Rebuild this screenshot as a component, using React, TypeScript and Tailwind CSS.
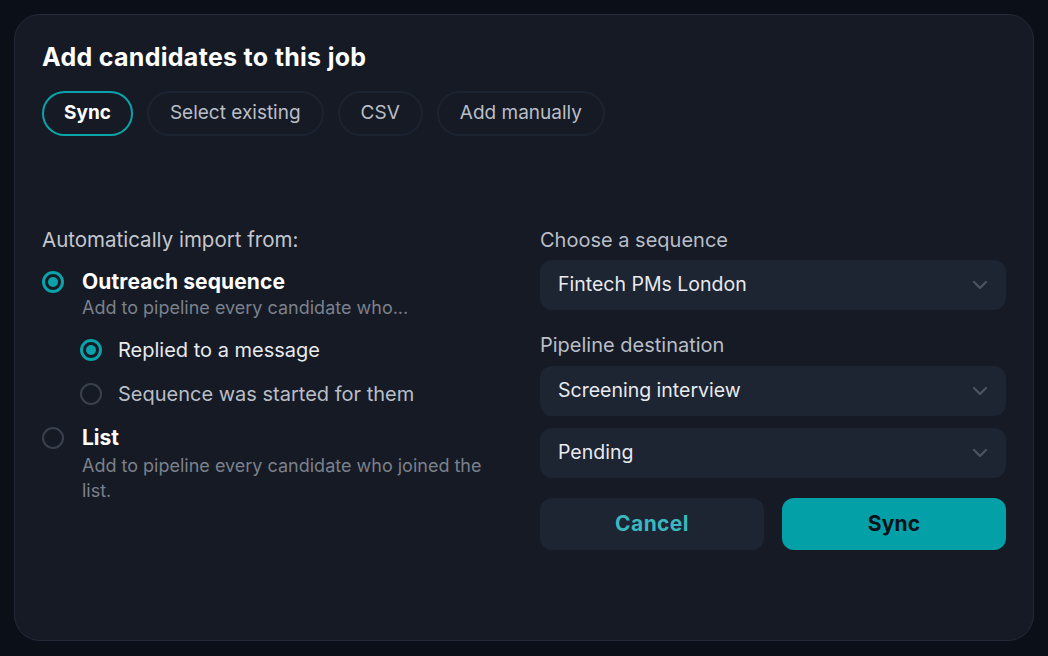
import React from "react";

function Radio({ checked }: { checked: boolean }) {
  return checked ? (
    <span className="flex h-[22px] w-[22px] shrink-0 items-center justify-center rounded-full border-[3px] border-[#0aa3a9]">
      <span className="h-[10px] w-[10px] rounded-full bg-[#0aa3a9]" />
    </span>
  ) : (
    <span className="h-[22px] w-[22px] shrink-0 rounded-full border-[2.5px] border-[#3a414e]" />
  );
}

function Chevron() {
  return (
    <svg width="24" height="24" viewBox="0 0 24 24" fill="none" stroke="#4a5262" strokeWidth="2.4" strokeLinecap="round" strokeLinejoin="round">
      <path d="M6 9l6 6 6-6" />
    </svg>
  );
}

function Select({ value }: { value: string }) {
  return (
    <div className="flex h-[50px] items-center justify-between rounded-[12px] bg-[#1d2432] pl-[18px] pr-[14px]">
      <span className="text-[19.5px] text-[#e8eaee]">{value}</span>
      <Chevron />
    </div>
  );
}

export default function App() {
  const tabs = ["Sync", "Select existing", "CSV", "Add manually"];
  return (
    <div
      className="flex h-[656px] w-[1048px] bg-[#0b0f17] p-[14px] pb-[15px]"
      style={{ fontFamily: "Inter, 'Noto Sans', sans-serif" }}
    >
      <div className="flex flex-1 flex-col rounded-[26px] border border-[#232b38] bg-[#151a25] px-[27px] pt-[27px]">
        <h1 className="text-[25px] font-bold leading-[30px] tracking-[0.3px] text-white">Add candidates to this job</h1>
        <div className="mt-[19px] flex gap-[14px]">
          {tabs.map((t, i) => (
            <div
              key={t}
              className={
                i === 0
                  ? "flex h-[45px] items-center rounded-full border-2 border-[#0aa3a9] px-[20px] text-[19px] font-bold text-white"
                  : "flex h-[45px] items-center rounded-full border-2 border-[#1c2330] px-[21px] text-[19px] text-[#b9bec7]"
              }
            >
              {t}
            </div>
          ))}
        </div>

        <div className="mt-[92px] flex gap-[50px]">
          <div className="w-[448px]">
            <div className="text-[20.5px] leading-[24px] text-[#c3c7ce]">Automatically import from:</div>
            <div className="mt-[19px] flex gap-[18px]">
              <Radio checked />
              <div className="-mt-[1px]">
                <div className="text-[21px] font-bold leading-[24px] tracking-[0.1px] text-white">Outreach sequence</div>
                <div className="mt-[2px] text-[18px] leading-[24px] text-[#7b818c]">Add to pipeline every candidate who...</div>
              </div>
            </div>
            <div className="ml-[38px] mt-[18px] flex items-center gap-[16px]">
              <Radio checked />
              <span className="text-[20px] leading-[24px] text-[#e8eaee]">Replied to a message</span>
            </div>
            <div className="ml-[38px] mt-[20px] flex items-center gap-[16px]">
              <Radio checked={false} />
              <span className="text-[20px] leading-[24px] text-[#b9bec7]">Sequence was started for them</span>
            </div>
            <div className="mt-[21px] flex gap-[18px]">
              <Radio checked={false} />
              <div className="-mt-[1px]">
                <div className="text-[21px] font-bold leading-[24px] text-white">List</div>
                <div className="mt-[3px] w-[410px] text-[18px] leading-[25px] text-[#7b818c]">
                  Add to pipeline every candidate who joined the list.
                </div>
              </div>
            </div>
          </div>

          <div className="flex flex-1 flex-col">
            <div className="text-[20px] leading-[24px] text-[#b9bec7]">Choose a sequence</div>
            <div className="mt-[8px]">
              <Select value="Fintech PMs London" />
            </div>
            <div className="mt-[23px] text-[20px] leading-[24px] text-[#b9bec7]">Pipeline destination</div>
            <div className="mt-[9px]">
              <Select value="Screening interview" />
            </div>
            <div className="mt-[12px]">
              <Select value="Pending" />
            </div>
            <div className="mt-[20px] flex gap-[18px]">
              <button className="h-[52px] flex-1 rounded-[12px] bg-[#1d2432] text-[21px] font-bold tracking-[0.4px] text-[#3bb7bf]">Cancel</button>
              <button className="h-[52px] flex-1 rounded-[12px] bg-[#03a0a7] text-[21px] font-bold tracking-[0.2px] text-[#0b1118]">Sync</button>
            </div>
          </div>
        </div>
      </div>
    </div>
  );
}
